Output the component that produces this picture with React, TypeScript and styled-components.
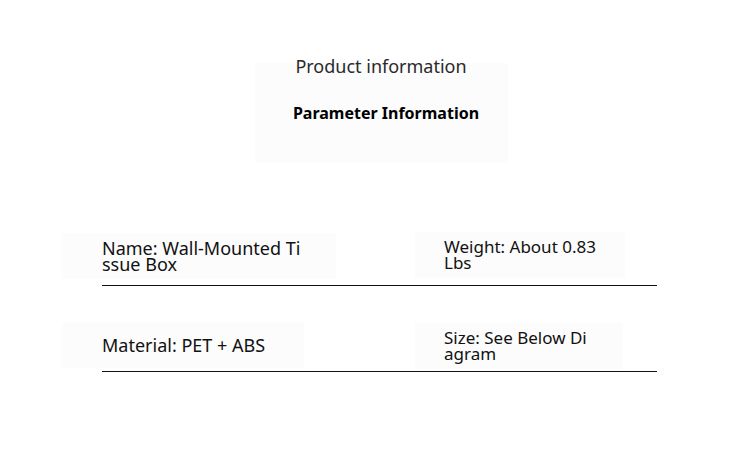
import styled, { createGlobalStyle } from "styled-components";

const GlobalStyle = createGlobalStyle`
  body {
    margin: 0;
    background: #fff;
    font-family: "Noto Sans", "DejaVu Sans", sans-serif;
    color: #111;
  }
`;

const Page = styled.div`
  width: 750px;
  height: 457px;
  overflow: hidden;
`;

const Header = styled.div`
  display: flex;
  flex-direction: column;
  align-items: center;
  padding-top: 55px;
  margin-left: 12px;
`;

const Title = styled.div`
  font-size: 18px;
  line-height: 22px;
  color: #2a2a2a;
  position: relative;
  z-index: 1;
`;

const Panel = styled.div`
  width: 253px;
  height: 100px;
  margin-top: -14px;
  background: #fcfcfc;
  display: flex;
  align-items: center;
  justify-content: center;
  padding-left: 10px;
  box-sizing: border-box;
`;

const Subtitle = styled.div`
  font-size: 16px;
  font-weight: 700;
  color: #000;
`;

const Table = styled.div`
  width: 555px;
  margin-left: 102px;
  margin-top: 65px;
`;

const Row = styled.div<{ $h: number; $gap: number }>`
  display: flex;
  align-items: center;
  height: ${(p) => p.$h}px;
  margin-top: ${(p) => p.$gap}px;
  border-bottom: 1px solid #111;
`;

const Cell = styled.div<{ $w?: number; $lift?: number }>`
  flex: ${(p) => (p.$w ? `0 0 ${p.$w}px` : "1")};
  display: flex;
  align-items: center;
  margin-bottom: ${(p) => (p.$lift ?? 0) * 2}px;
`;

const Label = styled.div<{ $pad: number; $right: number }>`
  background: #fcfcfc;
  margin-left: -${(p) => p.$pad}px;
  padding: 7px ${(p) => p.$right}px 7px ${(p) => p.$pad}px;
  min-height: 32px;
  display: flex;
  align-items: center;
`;

const Text = styled.div<{ $w: number; $size: number }>`
  width: ${(p) => p.$w}px;
  font-size: ${(p) => p.$size}px;
  line-height: 16px;
  word-break: break-all;
  white-space: break-spaces;
  color: #111;
`;

export default function App() {
  return (
    <Page>
      <GlobalStyle />
      <Header>
        <Title>Product information</Title>
        <Panel>
          <Subtitle>Parameter Information</Subtitle>
        </Panel>
      </Header>
      <Table>
        <Row $h={57} $gap={0}>
          <Cell $w={342} $lift={1}>
            <Label $pad={40} $right={32}>
              <Text $w={202} $size={18}>Name: Wall-Mounted Tissue Box</Text>
            </Label>
          </Cell>
          <Cell $lift={2}>
            <Label $pad={29} $right={24}>
              <Text $w={157} $size={17}>Weight: About 0.83 Lbs</Text>
            </Label>
          </Cell>
        </Row>
        <Row $h={50} $gap={35}>
          <Cell $w={342} $lift={1}>
            <Label $pad={40} $right={0}>
              <Text $w={202} $size={18}>Material: PET + ABS</Text>
            </Label>
          </Cell>
          <Cell>
            <Label $pad={29} $right={31}>
              <Text $w={148} $size={17}>Size: See Below Diagram</Text>
            </Label>
          </Cell>
        </Row>
      </Table>
    </Page>
  );
}
